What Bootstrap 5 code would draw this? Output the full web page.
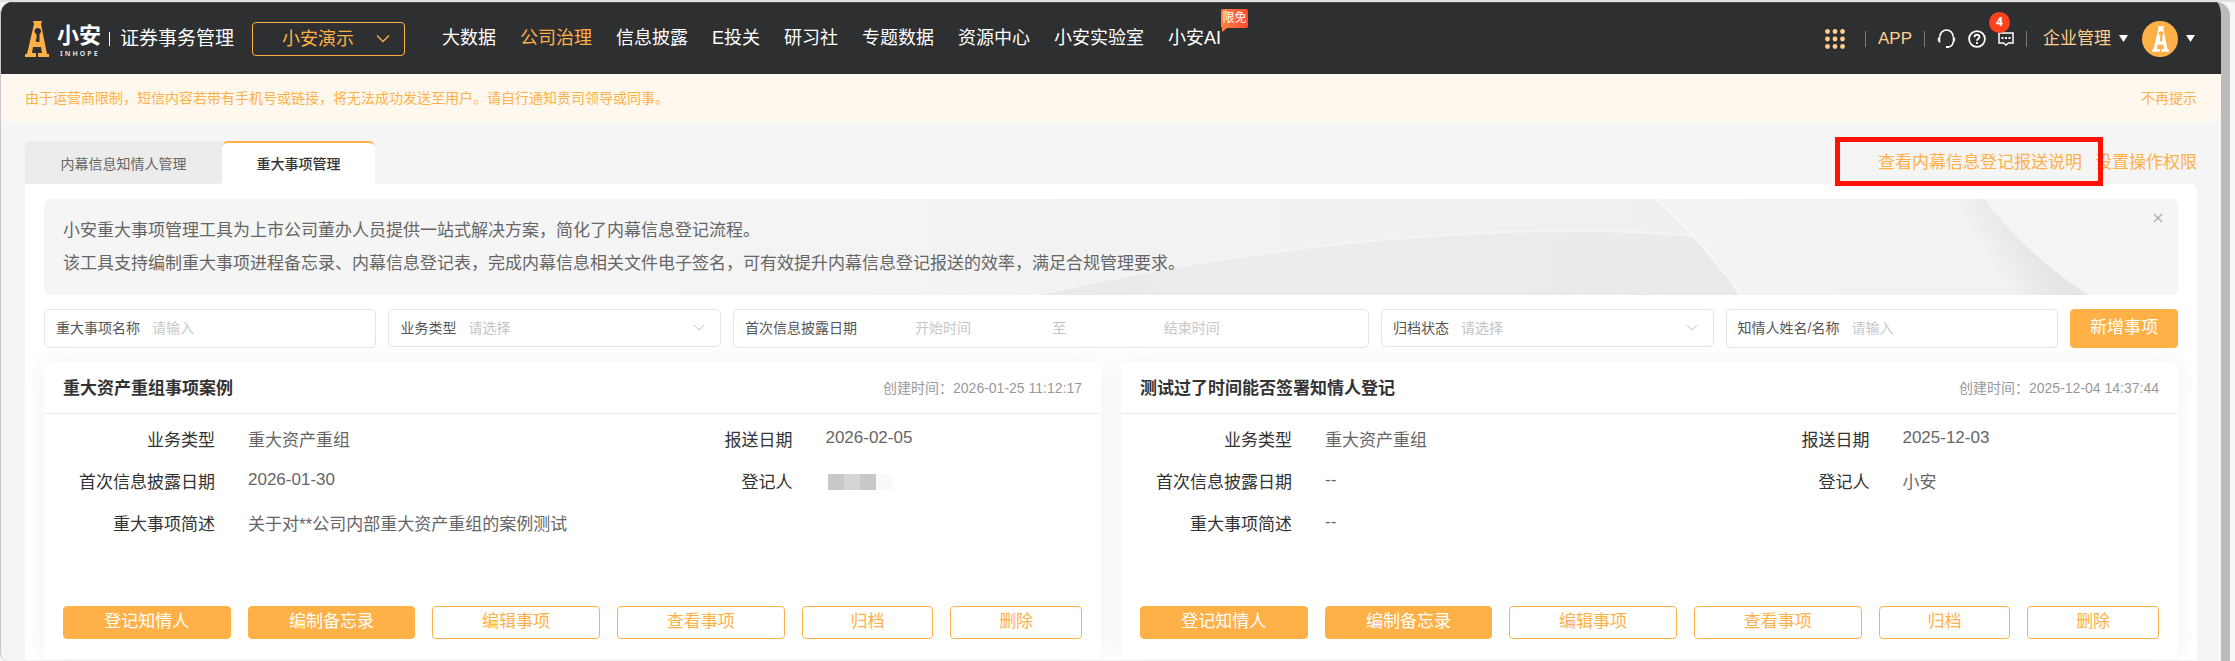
<!DOCTYPE html>
<html lang="zh-CN">
<head>
<meta charset="utf-8">
<meta name="viewport" content="width=device-width, initial-scale=1">
<title>重大事项管理 - 小安证券事务管理</title>
<link href="https://cdn.jsdelivr.net/npm/bootstrap@5.3.0/dist/css/bootstrap.min.css" rel="stylesheet">
<style>
  :root { --brand: #ffb148; --ink: #333; --soft: #666; --line: #e4e4e4; }
  body { font-family: "Liberation Sans", "Noto Sans CJK SC", sans-serif; font-size: 17px; line-height: 25px; color: var(--soft); background: #f6f6f6; padding: 2px 5px 0 0; min-height: 100vh; background-image: linear-gradient(#dfe2e2, #dfe2e2); background-size: 100% 2px; background-repeat: no-repeat; }
  a { text-decoration: none; color: var(--brand); }
  .app-frame { background: #f5f5f5; border-left: 1px solid #c8c8c8; border-right: 9px solid #bbb; border-radius: 12px 14px 0 8px; min-height: calc(100vh - 2px); overflow: hidden; }
  .topbar { background: #2e2f31; height: 72px; padding: 0 26px 0 24px; border-top: 1px solid #4a4b4d; flex-wrap: nowrap; }
  .brand-cn { color: #fff; font-size: 22px; line-height: 26px; font-weight: 700; }
  .brand-en { color: #ddd; font: 700 7px/10px "Noto Sans", sans-serif; letter-spacing: 2px; padding-left: 3px; }
  .brand-sub { color: #fff; font-size: 19px; padding-left: 10px; }
  .v-rule { width: 1px; height: 16px; background: #77787a; }
  .v-rule.bright { background: #fff; height: 14px; }
  .org-btn { width: 153px; height: 34px; border: 1px solid var(--brand); border-radius: 4px; color: var(--brand); background: none; font-size: 18px; line-height: 24px; padding: 0 14px 0 29px; margin-left: 18px; }
  .main-menu { gap: 24px; margin-left: 37px; font-size: 18px; }
  .main-menu a { color: #fff; white-space: nowrap; }
  .main-menu a.active { color: var(--brand); }
  .free-tag { position: absolute; left: 100%; top: -17px; font-size: 12px; line-height: 19px; width: 27px; text-align: center; color: #fff; background: linear-gradient(90deg, #ff8340, #ff4a30); border-radius: 2px; }
  .free-tag::after { content: ""; position: absolute; left: 1px; top: 19px; border: solid transparent; border-width: 0 5px 4px 0; border-top: 4px solid #ff8040; border-bottom: 0; }
  .tools a, .tools button { color: #ffcf8f; background: none; border: 0; padding: 0; }
  .tools svg { display: block; }
  .tool-set { gap: 12px; }
  .tool-set + button { margin-left: 14px; }
  .msg-count { position: absolute; left: -9px; top: -20px; width: 21px; height: 21px; border-radius: 50%; background: #fe431c; color: #fff; font: 700 12px/20px "Noto Sans", sans-serif; text-align: center; }
  .notice { background: #fff8ee; color: var(--brand); font-size: 14px; height: 48px; padding: 0 24px; border-radius: 0 0 6px 6px; }
  .notice button { color: var(--brand); background: none; border: 0; padding: 0; }
  .page-body { padding: 19px 24px 0; }
  .tab-strip { font-size: 14px; border: 0; }
  .tab-strip .nav-link { height: 43px; margin: 0; border: 0; border-radius: 6px 0 6px 0; background: #ececec; color: var(--soft); width: 197px; padding: 3px 0 0; text-align: center; }
  .tab-strip .nav-link.active { background: #fff; color: var(--ink); width: 153px; border-top: 2px solid var(--brand); border-radius: 6px 6px 0 0; padding: 1px 0 0; font-weight: 500; }
  .head-links { gap: 13px; }
  .callout-box { position: absolute; left: -43px; right: -21px; top: -13px; bottom: -11px; border: 5px solid #ff1200; pointer-events: none; }
  .panel { background: #fff; border-radius: 0 6px 0 0; padding: 15px 19px 1px; }
  .intro { background: #f5f5f5; border-radius: 7px; height: 96px; padding: 15px 19px; line-height: 33px; overflow: hidden; position: relative; }
  .intro p { margin: 0; position: relative; }
  .intro-art { position: absolute; inset: 0; width: 100%; height: 100%; }
  .intro-close { position: absolute; right: 13px; top: 12px; width: 14px; height: 14px; border: 0; background: none; padding: 0; }
  .intro-close svg { display: block; margin: auto; }
  .filters { display: grid; grid-template-columns: 1fr 1fr 1.913fr 1fr 1fr 108px; gap: 12px; margin: 14px 0; font-size: 14px; align-items: start; }
  .field { height: 39px; border: 1px solid var(--line); border-radius: 5px; padding: 0 11px; display: flex; align-items: center; gap: 12px; min-width: 0; }
  .field.pick { height: 38px; }
  .field label { white-space: nowrap; color: #555; flex: none; }
  .field input, .field select { border: 0; outline: 0; padding: 0; background: none; min-width: 0; width: 100%; font-size: 14px; color: #c4c4c4; appearance: none; }
  .field input::placeholder { color: #c8c8c8; opacity: 1; }
  .field select { background: url("data:image/svg+xml,%3Csvg xmlns='http://www.w3.org/2000/svg' width='12' height='8' fill='none' stroke='%23c4c4c4'%3E%3Cpath d='M1 1l5 5 5-5'/%3E%3C/svg%3E") no-repeat right 4px center; }
  .date-range { display: grid; grid-template-columns: 148fr 84fr 180fr 75fr; flex: 1; min-width: 0; text-align: center; color: #c4c4c4; }
  .date-range input { text-align: center; }
  .btn-brand, .btn-line { --bs-btn-padding-x: 0; --bs-btn-padding-y: 0; font-size: 17px; border-radius: 4px; border: 1px solid var(--brand); height: 33px; line-height: 28px; padding-bottom: 2px; }
  .btn-brand, .btn-brand:hover { background: var(--brand); color: #fff; }
  .btn-line { color: var(--brand); background: #fff; }
  .filters .btn-brand { height: 39px; }
  .case-grid { display: grid; grid-template-columns: 1fr 1fr; gap: 20px; }
  .case-card { border: 0; border-radius: 5px; box-shadow: 0 0 24px rgba(0,0,0,.06); --bs-card-bg: #fff; color: var(--soft); }
  .case-head { height: 52px; border-bottom: 1px solid #ececec; padding: 1px 19px 0; }
  .case-head h2 { font-size: 17px; line-height: 25px; font-weight: 700; color: var(--ink); margin: 0; }
  .case-head time { font-size: 14px; color: #999; }
  .case-info { display: grid; grid-template-columns: 17fr 13fr; padding: 14px 19px 0; height: 192px; align-content: start; }
  .case-info dl { display: grid; grid-template-columns: 152px 1fr; column-gap: 33px; row-gap: 17px; margin: 0; align-content: start; }
  .case-info dt { font-weight: 400; color: var(--ink); text-align: right; }
  .case-info dd { margin: 0; }
  .case-info .latin { line-height: 19px; }
  .masked { display: flex; padding: 4px 0 0 3px; }
  .masked i { width: 16px; height: 16px; background: #c8c8c8; }
  .masked i:nth-child(2) { background: #d5d5d5; }
  .masked i:nth-child(4) { background: #f8f9fb; }
  .case-actions { display: grid; grid-template-columns: repeat(4, 14fr) repeat(2, 11fr); gap: 17px; padding: 0 19px 20px; }
</style>
</head>
<body>
<svg class="d-none" aria-hidden="true">
  <symbol id="tower" viewBox="0 0 24 36">
    <path fill-rule="evenodd" d="M8 0h9l-1 3 6 30h2v3H0v-3h2L9 3zM12.500 7a3.200 3.200 0 0 0-2.500 5l1.500 1.500V18l-1 1 1 2h3v-7.500l1-1.500A3.200 3.200 0 0 0 12.500 7zM8 26l-1 6h4v4h2v-4h4l-1-6z"/>
  </symbol>
</svg>
<div class="app-frame">
  <header class="topbar navbar py-0 justify-content-start">
    <a href="#" class="d-flex align-items-center">
      <svg width="24" height="36" fill="#ffb148"><use href="#tower"/></svg>
      <span class="d-flex flex-column ms-2 pt-1 text-nowrap"><span class="brand-cn">小安</span><span class="brand-en">INHOPE</span></span>
    </a>
    <span class="v-rule bright ms-2"></span>
    <span class="brand-sub text-nowrap">证券事务管理</span>
    <button type="button" class="org-btn d-flex align-items-center justify-content-between text-nowrap flex-shrink-0">小安演示
      <svg width="14" height="10" fill="none" stroke="currentColor" stroke-width="1.300"><path d="M1 1.500l6 6 6-6"/></svg>
    </button>
    <nav class="main-menu d-flex">
      <a href="#">大数据</a><a href="#" class="active">公司治理</a><a href="#">信息披露</a><a href="#">E投关</a><a href="#">研习社</a><a href="#">专题数据</a><a href="#">资源中心</a><a href="#">小安实验室</a><a href="#" class="position-relative">小安AI<span class="free-tag">限免</span></a>
    </nav>
    <div class="tools d-flex align-items-center ms-auto text-nowrap">
      <div class="tool-set d-flex align-items-center">
        <button type="button" class="me-2" aria-label="应用">
          <svg width="20" height="20" fill="#ffcf8f"><circle cx="2.500" cy="2.500" r="2.400"/><circle cx="10" cy="2.500" r="2.400"/><circle cx="17.500" cy="2.500" r="2.400"/><circle cx="2.500" cy="10" r="2.400"/><circle cx="10" cy="10" r="2.400"/><circle cx="17.500" cy="10" r="2.400"/><circle cx="2.500" cy="17.500" r="2.400"/><circle cx="10" cy="17.500" r="2.400"/><circle cx="17.500" cy="17.500" r="2.400"/></svg>
        </button>
        <span class="v-rule"></span>
        <a href="#">APP</a>
        <span class="v-rule"></span>
        <button type="button" aria-label="客服">
          <svg width="19" height="20" viewBox="0 0 19 20" fill="none" stroke="#fff" stroke-width="1.600"><path d="M3 7.500a6.500 6.500 0 0 1 13 0M16 13c0 3-2 4.500-4.500 5"/><path d="M3 7.500c-2.500.5-2.500 5.500 0 6zM16 7.500c2.500.5 2.500 5.500 0 6z" fill="#fff" stroke-width=".6"/><path d="M9 18h3" stroke-width="2"/></svg>
        </button>
        <button type="button" aria-label="帮助">
          <svg width="18" height="18" fill="none" stroke="#fff" stroke-width="1.800"><circle cx="9" cy="9" r="7.900"/><path d="M6.500 7.200c0-3.300 5-3.200 5-.2 0 1.800-2.500 1.800-2.500 3.700M9 12v2"/></svg>
        </button>
        <button type="button" class="position-relative" aria-label="消息">
          <svg width="16" height="14" fill="none" stroke="#fff" stroke-width="1.500"><path d="M1 1h14v10h-4.500L8 13l-2.500-2H1z"/><path d="M3.500 6h2M7 6h2M10.500 6h2" stroke-width="2"/></svg>
          <span class="msg-count">4</span>
        </button>
        <span class="v-rule"></span>
        <a href="#" class="d-flex align-items-center ms-1">企业管理
          <svg class="ms-2" width="9" height="7" fill="#fff"><path d="M0 0h9L4.500 7z"/></svg></a>
      </div>
      <button type="button" class="d-flex align-items-center" aria-label="账户">
        <svg width="36" height="36"><circle cx="18" cy="18" r="18" fill="#ffb148"/><use href="#tower" x="10" y="5" width="17" height="26" fill="#fff"/></svg>
        <svg class="ms-2" width="9" height="7" fill="#fff"><path d="M0 0h9L4.500 7z"/></svg>
      </button>
    </div>
  </header>

  <div class="notice d-flex align-items-center justify-content-between">
    <span>由于运营商限制，短信内容若带有手机号或链接，将无法成功发送至用户。请自行通知贵司领导或同事。</span>
    <button type="button">不再提示</button>
  </div>

  <main class="page-body">
    <div class="d-flex justify-content-between">
      <ul class="nav nav-tabs tab-strip">
        <li class="nav-item"><a class="nav-link d-flex align-items-center justify-content-center" href="#">内幕信息知情人管理</a></li>
        <li class="nav-item"><a class="nav-link active d-flex align-items-center justify-content-center" href="#">重大事项管理</a></li>
      </ul>
      <div class="head-links d-flex align-items-center">
        <span class="position-relative z-1"><a href="#">查看内幕信息登记报送说明</a><span class="callout-box"></span></span>
        <a href="#">设置操作权限</a>
      </div>
    </div>

    <section class="panel">
      <div class="intro">
        <svg class="intro-art" viewBox="0 0 2134 96" preserveAspectRatio="none" aria-hidden="true">
          <defs>
            <linearGradient id="fade"><stop offset="0" stop-color="#f5f5f5"/><stop offset="1" stop-color="#efefef"/></linearGradient>
            <linearGradient id="hill"><stop offset="0" stop-color="#e9e9e9"/><stop offset=".3" stop-color="#ededed"/><stop offset="1" stop-color="#eaeaea"/></linearGradient>
            <linearGradient id="fold" gradientUnits="userSpaceOnUse" x1="1950" y1="70" x2="1990" y2="46"><stop offset="0" stop-color="#f2f2f2"/><stop offset="1" stop-color="#e5e5e5"/></linearGradient>
          </defs>
          <path d="M500 0h1200v96H500z" fill="url(#fade)"/>
          <path d="M993 96C1180 52 1380 32 1528 32q70 0 123 5l60 59z" fill="url(#hill)"/>
          <path d="M993 96C1180 52 1380 32 1528 32q70 0 123 5" fill="none" stroke="#f4f4f4" stroke-width="2"/>
          <path d="M1612 0q45 40 85 96h437V0z" fill="#f3f3f3"/>
          <path d="M1612 0q45 40 85 96" fill="none" stroke="#f8f8f8" stroke-width="2"/>
          <path d="M1700 0h241q35 50 103 96h-250z" fill="url(#fold)"/>
          <path d="M1941 0q35 50 103 96h90V0z" fill="#f5f5f5"/>
        </svg>
        <p>小安重大事项管理工具为上市公司董办人员提供一站式解决方案，简化了内幕信息登记流程。</p>
        <p>该工具支持编制重大事项进程备忘录、内幕信息登记表，完成内幕信息相关文件电子签名，可有效提升内幕信息登记报送的效率，满足合规管理要求。</p>
        <button type="button" class="intro-close" aria-label="关闭"><svg width="10" height="10" stroke="#aaa" stroke-width="1.200"><path d="M1 1l8 8M9 1L1 9"/></svg></button>
      </div>

      <form class="filters">
        <div class="field"><label for="f-name">重大事项名称</label><input id="f-name" type="text" placeholder="请输入"></div>
        <div class="field pick"><label for="f-type">业务类型</label><select id="f-type"><option>请选择</option></select></div>
        <div class="field"><label for="f-from">首次信息披露日期</label>
          <div class="date-range"><input id="f-from" type="text" placeholder="开始时间"><span>至</span><input type="text" aria-label="结束时间" placeholder="结束时间"></div>
        </div>
        <div class="field pick"><label for="f-state">归档状态</label><select id="f-state"><option>请选择</option></select></div>
        <div class="field"><label for="f-person">知情人姓名/名称</label><input id="f-person" type="text" placeholder="请输入"></div>
        <button type="button" class="btn btn-brand">新增事项</button>
      </form>

      <div class="case-grid">
        <article class="card case-card">
          <div class="case-head d-flex align-items-center justify-content-between"><h2>重大资产重组事项案例</h2><time>创建时间：2026-01-25 11:12:17</time></div>
          <div class="case-info">
            <dl><dt>业务类型</dt><dd>重大资产重组</dd><dt>首次信息披露日期</dt><dd class="latin">2026-01-30</dd><dt>重大事项简述</dt><dd>关于对**公司内部重大资产重组的案例测试</dd></dl>
            <dl><dt>报送日期</dt><dd class="latin">2026-02-05</dd><dt>登记人</dt><dd class="masked"><i></i><i></i><i></i><i></i></dd></dl>
          </div>
          <div class="case-actions">
            <button type="button" class="btn btn-brand">登记知情人</button><button type="button" class="btn btn-brand">编制备忘录</button><button type="button" class="btn btn-line">编辑事项</button><button type="button" class="btn btn-line">查看事项</button><button type="button" class="btn btn-line">归档</button><button type="button" class="btn btn-line">删除</button>
          </div>
        </article>
        <article class="card case-card">
          <div class="case-head d-flex align-items-center justify-content-between"><h2>测试过了时间能否签署知情人登记</h2><time>创建时间：2025-12-04 14:37:44</time></div>
          <div class="case-info">
            <dl><dt>业务类型</dt><dd>重大资产重组</dd><dt>首次信息披露日期</dt><dd class="latin">--</dd><dt>重大事项简述</dt><dd class="latin">--</dd></dl>
            <dl><dt>报送日期</dt><dd class="latin">2025-12-03</dd><dt>登记人</dt><dd>小安</dd></dl>
          </div>
          <div class="case-actions">
            <button type="button" class="btn btn-brand">登记知情人</button><button type="button" class="btn btn-brand">编制备忘录</button><button type="button" class="btn btn-line">编辑事项</button><button type="button" class="btn btn-line">查看事项</button><button type="button" class="btn btn-line">归档</button><button type="button" class="btn btn-line">删除</button>
          </div>
        </article>
      </div>
    </section>
  </main>
</div>
<script src="https://cdn.jsdelivr.net/npm/bootstrap@5.3.0/dist/js/bootstrap.bundle.min.js"></script>
</body>
</html>
